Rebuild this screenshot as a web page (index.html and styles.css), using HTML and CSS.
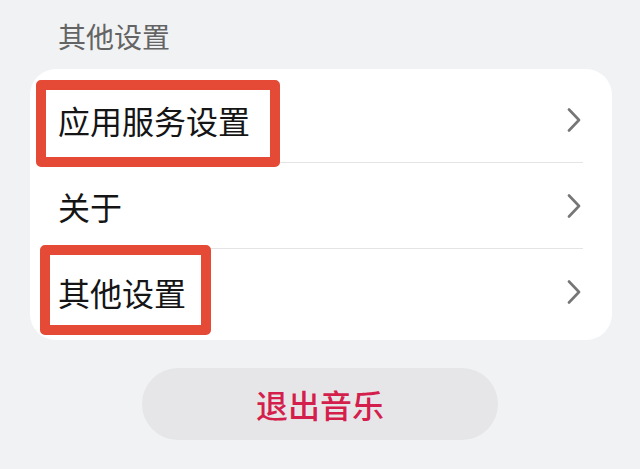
FILE: index.html
```html
<!DOCTYPE html>
<html lang="zh">
<head>
<meta charset="utf-8">
<title>设置</title>
<link rel="stylesheet" href="styles.css">
</head>
<body>
<div class="page">
  <div class="section-title">其他设置</div>
  <div class="card">
    <div class="row">
      <span class="label">应用服务设置</span>
      <svg class="chev" viewBox="0 0 14 24" width="14" height="24"><path d="M2 1.5 L12 12 L2 22.5" fill="none" stroke="#767676" stroke-width="2.6" stroke-linecap="round" stroke-linejoin="round"/></svg>
      <span class="mark mark-1"></span>
    </div>
    <div class="row">
      <span class="label">关于</span>
      <svg class="chev" viewBox="0 0 14 24" width="14" height="24"><path d="M2 1.5 L12 12 L2 22.5" fill="none" stroke="#767676" stroke-width="2.6" stroke-linecap="round" stroke-linejoin="round"/></svg>
    </div>
    <div class="row last">
      <span class="label">其他设置</span>
      <svg class="chev" viewBox="0 0 14 24" width="14" height="24"><path d="M2 1.5 L12 12 L2 22.5" fill="none" stroke="#767676" stroke-width="2.6" stroke-linecap="round" stroke-linejoin="round"/></svg>
      <span class="mark mark-2"></span>
    </div>
  </div>
  <div class="exit">退出音乐</div>
</div>
</body>
</html>
```
FILE: styles.css
```css
html, body {
  margin: 0;
  padding: 0;
  background: #f1f2f4;
}
.page {
  width: 640px;
  height: 469px;
  overflow: hidden;
  font-family: "Noto Sans CJK SC", "Noto Sans", sans-serif;
}
.section-title {
  padding: 16px 0 13px 58px;
  font-size: 28px;
  line-height: 40px;
  color: #646464;
}
.card {
  margin: 0 28px 0 30px;
  background: #fff;
  border-radius: 26px;
  padding: 8px 0 6px;
}
.row {
  position: relative;
  display: flex;
  align-items: center;
  justify-content: space-between;
  height: 85px;
  margin: 0 29px 0 28px;
  border-bottom: 1px solid #e4e4e6;
}
.row.last {
  border-bottom: none;
}
.label {
  font-size: 32px;
  line-height: 40px;
  color: #151515;
  padding-top: 1px;
}
.chev {
  display: block;
  margin-right: 2px;
}
.mark {
  position: absolute;
  border: 10px solid #e54a36;
  border-radius: 5px;
  box-sizing: border-box;
}
.mark-1 {
  left: -22px;
  top: 3px;
  width: 244px;
  height: 87px;
}
.mark-2 {
  left: -18px;
  top: -4px;
  width: 171px;
  height: 90px;
}
.exit {
  margin: 28px auto 0;
  width: 356px;
  height: 72px;
  border-radius: 36px;
  background: #e6e6e9;
  color: #d41f4c;
  font-size: 32px;
  font-weight: 500;
  display: flex;
  align-items: center;
  justify-content: center;
}
```
